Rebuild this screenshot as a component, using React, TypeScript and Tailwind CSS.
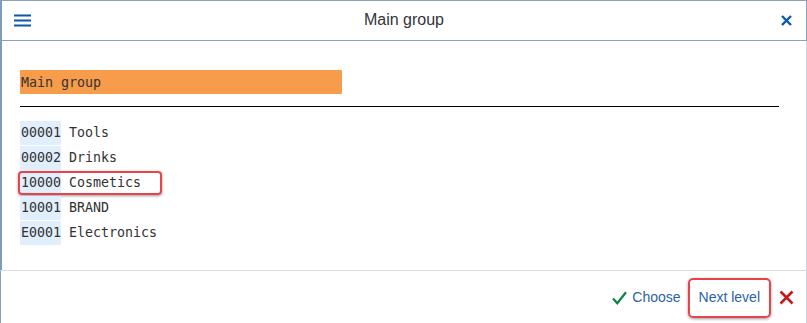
import React from "react";

const rows = [
  { code: "00001", name: "Tools" },
  { code: "00002", name: "Drinks" },
  { code: "10000", name: "Cosmetics", hl: true },
  { code: "10001", name: "BRAND" },
  { code: "E0001", name: "Electronics" },
];

export default function App() {
  return (
    <div className="w-[807px] h-[323px] bg-white overflow-hidden flex flex-col font-['Liberation_Sans',Arial,sans-serif]">
      <div className="h-[41px] shrink-0 grid grid-cols-[1fr_auto_1fr] items-center border-t border-b border-r border-[#8aa2bd] border-l-2 border-l-[#7b9bc0]">
        <div className="pl-[12px] flex items-center">
          <svg width="17" height="13" viewBox="0 0 17 13">
            <rect x="0" y="0.5" width="17" height="2" fill="#0a58a6" />
            <rect x="0" y="5.5" width="17" height="2" fill="#0a58a6" />
            <rect x="0" y="10.5" width="17" height="2" fill="#0a58a6" />
          </svg>
        </div>
        <div className="text-[16px] text-[#32363a] leading-none pb-[1px]">Main group</div>
        <div className="flex justify-end pr-[14px]">
          <svg width="11" height="11" viewBox="0 0 11 11">
            <path d="M1 1 L10 10 M10 1 L1 10" stroke="#0a58a6" strokeWidth="2.4" />
          </svg>
        </div>
      </div>

      <div className="h-[229px] shrink-0 border-l-2 border-r border-[#7b9bc0] border-r-[#c8d3de] pt-[29px] pl-[18px] font-['DejaVu_Sans_Mono',monospace] text-[13.3px] text-[#333333]">
        <div className="w-[322px] h-[24px] bg-[#f79c4a] flex items-center pl-[1px] pt-[2px] rounded-[1px]">Main group</div>
        <div className="w-[759px] h-[1px] bg-black mt-[12px]"></div>
        <div className="mt-[14px] flex flex-col">
          {rows.map((r) => (
            <div key={r.code} className="h-[25px] flex items-start relative">
              <div className="h-[24px] flex items-center">
                <span className="bg-[#e1eefb] h-[24px] pl-[1px] flex items-center">{r.code}</span>
                <span className="whitespace-pre"> {r.name}</span>
              </div>
              {r.hl && (
                <div className="absolute left-[-2px] top-[0px] w-[144px] h-[24px] border-2 border-[#e8434b] rounded-[4px] shadow-[0_1px_3px_rgba(0,0,0,0.4)]"></div>
              )}
            </div>
          ))}
        </div>
      </div>

      <div className="flex-1 border-t border-t-[#dcdcdc] border-l border-r border-[#8d9db3] border-r-[#c8d3de] flex items-center justify-end pr-[12px] pt-[1px]">
        <svg width="15" height="14" viewBox="0 0 15 14" className="mt-[1px]">
          <path d="M1 7.5 L5.3 12.2 L14 1.2" stroke="#138243" strokeWidth="2.3" fill="none" />
        </svg>
        <span className="ml-[5px] text-[14px] text-[#2a64a6]">Choose</span>
        <div className="ml-[7px] h-[40px] px-[9px] border-2 border-[#e8434b] rounded-[5px] shadow-[0_1px_3px_rgba(0,0,0,0.4)] flex items-center text-[14px] text-[#2a64a6]">
          Next level
        </div>
        <svg width="15" height="15" viewBox="0 0 15 15" className="ml-[8px]">
          <path d="M1.5 1.5 L13.5 13.5 M13.5 1.5 L1.5 13.5" stroke="#c21a1a" strokeWidth="2.6" />
        </svg>
      </div>
    </div>
  );
}
